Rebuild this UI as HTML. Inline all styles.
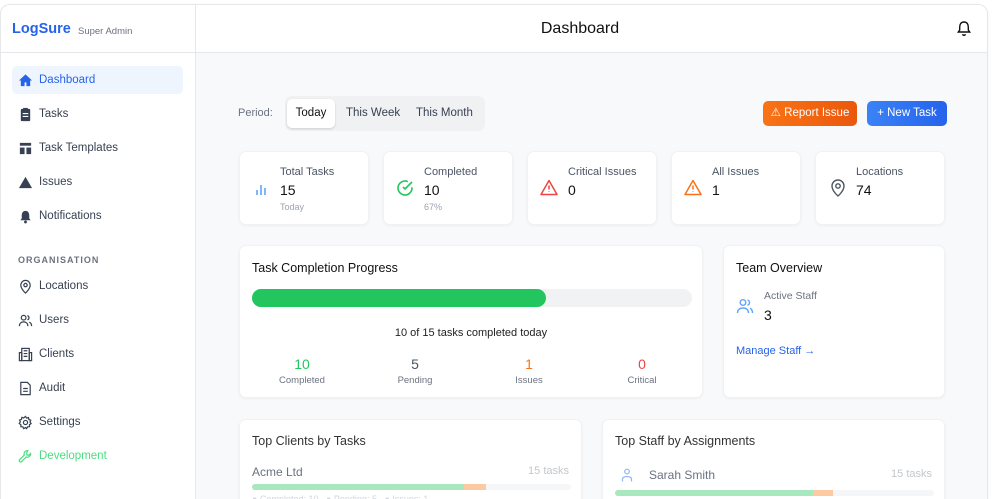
<!DOCTYPE html>
<html><head><meta charset="utf-8"><style>
*{box-sizing:border-box;margin:0;padding:0}
html,body{width:1000px;height:499px;overflow:hidden}
body{background:#fff;font-family:"Liberation Sans",Arial,sans-serif;color:#111827;position:relative}
.frame{position:absolute;left:0;top:4px;width:988px;height:495px;border:1px solid #e5e7eb;border-bottom:none;border-radius:10px 10px 0 0;overflow:hidden;background:#f8f9fb;box-shadow:0 1px 3px rgba(0,0,0,.06)}
.side{position:absolute;left:0;top:0;width:195px;height:100%;background:#fff;border-right:1px solid #e5e7eb}
.logo{position:absolute;left:11px;top:16px;font-size:14.5px;font-weight:bold;color:#2563eb}
.role{position:absolute;left:77px;top:21px;font-size:9.5px;color:#6b7280}
.sline{position:absolute;left:0;top:47px;width:195px;border-top:1px solid #e5e7eb}
.nav{position:absolute;left:11px;width:171px;height:28px;display:flex;align-items:center;font-size:11.5px;color:#374151;padding-left:6px}
.nav svg{width:15px;height:15px;margin-right:6px}
.nav.act{background:#eff5ff;color:#2563eb;border-radius:5px}
.org{position:absolute;left:17px;top:250px;font-size:9px;letter-spacing:1px;color:#6b7280;font-weight:bold}
.head{position:absolute;left:195px;top:0;right:0;height:48px;background:#fff;border-bottom:1px solid #e5e7eb}
.title{position:absolute;left:0;width:768px;text-align:center;top:15px;font-size:16px;color:#111}
.card{position:absolute;background:#fff;border-radius:7px;box-shadow:0 1px 2px rgba(0,0,0,.05);border:1px solid #f1f2f4}
.lbl{font-size:11px;color:#4b5563}
.big{font-size:14px;color:#111}
.sub{font-size:9px;color:#9ca3af}
</style></head><body>
<div class="frame">
<div class="side">
<div class="logo">LogSure</div><div class="role">Super Admin</div>
<div class="sline"></div>
<div class="nav act" style="top:61px"><svg viewBox="0 0 16 16"><path d="M8 1.5 1 8h2v6h4v-4h2v4h4V8h2z" fill="#2563eb"/></svg>Dashboard</div>
<div class="nav" style="top:95px"><svg viewBox="0 0 16 16"><rect x="3" y="2" width="10" height="13" rx="1" fill="#374151"/><rect x="5.5" y="1" width="5" height="2.5" fill="#374151"/><path d="M5 7h6M5 10h6" stroke="#fff" stroke-width="1.2"/></svg>Tasks</div>
<div class="nav" style="top:129px"><svg viewBox="0 0 16 16"><rect x="2" y="2" width="12" height="3" fill="#374151"/><rect x="2" y="7" width="5" height="7" fill="#374151"/><rect x="9" y="7" width="5" height="7" fill="#374151"/></svg>Task Templates</div>
<div class="nav" style="top:163px"><svg viewBox="0 0 16 16"><path d="M8 2 15 14H1z" fill="#374151"/></svg>Issues</div>
<div class="nav" style="top:197px"><svg viewBox="0 0 16 16"><path d="M8 2c-3 0-4 2.5-4 5v3l-1.5 2h11L12 10V7c0-2.5-1-5-4-5z" fill="#374151"/><circle cx="8" cy="13.8" r="1.5" fill="#374151"/></svg>Notifications</div>
<div class="org">ORGANISATION</div>
<div class="nav" style="top:267px"><svg viewBox="0 0 16 16" fill="none" stroke="#374151" stroke-width="1.3"><path d="M8 15s5-4.5 5-8.5A5 5 0 0 0 3 6.5C3 10.5 8 15 8 15z"/><circle cx="8" cy="6.5" r="1.8"/></svg>Locations</div>
<div class="nav" style="top:301px"><svg viewBox="0 0 16 16" fill="none" stroke="#374151" stroke-width="1.3"><circle cx="6" cy="5" r="2.5"/><path d="M1.5 14c0-3 2-4.5 4.5-4.5s4.5 1.5 4.5 4.5M10 2.7a2.4 2.4 0 0 1 0 4.6M12 9.8c1.5.5 2.5 2 2.5 4.2"/></svg>Users</div>
<div class="nav" style="top:335px"><svg viewBox="0 0 16 16" fill="none" stroke="#374151" stroke-width="1.3"><rect x="4" y="1.5" width="8" height="13"/><path d="M1.5 6h2.5v8.5H1.5zM12 6h2.5v8.5H12zM6 4h4M6 7h4M6 10h4"/></svg>Clients</div>
<div class="nav" style="top:369px"><svg viewBox="0 0 16 16" fill="none" stroke="#374151" stroke-width="1.3"><path d="M3 1.5h7l3 3v10H3z"/><path d="M5.5 8h5M5.5 11h5"/></svg>Audit</div>
<div class="nav" style="top:403px"><svg viewBox="0 0 16 16" fill="none" stroke="#374151" stroke-width="1.3"><circle cx="8" cy="8" r="2.2"/><path d="M8 1.5l1.2 1.8 2-.6.4 2.1 2 .8-.8 2 1.2 1.6-1.8 1.2.1 2.1-2.1.1-1 1.9L8 13.4l-1.9 1.1-1-1.9-2.1-.1.1-2.1L1.3 9l1.2-1.6-.8-2 2-.8.4-2.1 2 .6z"/></svg>Settings</div>
<div class="nav" style="top:437px;color:#4ade80"><svg viewBox="0 0 16 16" fill="none" stroke="#4ade80" stroke-width="1.3"><path d="M10.5 1.8a3.5 3.5 0 0 0-3.8 4.7L1.8 11.4a1.4 1.4 0 0 0 2 2l4.9-4.9a3.5 3.5 0 0 0 4.7-3.8l-2 2-1.9-.3-.3-1.9z"/></svg>Development</div>
</div>
<div class="head"><div class="title">Dashboard</div>
<svg style="position:absolute;left:760px;top:15px" width="16" height="17" viewBox="0 0 16 17" fill="none" stroke="#111" stroke-width="1.4"><path d="M8 2c-3 0-4.3 2.3-4.3 5v3L2.3 12h11.4L12.3 10V7C12.3 4.3 11 2 8 2z"/><path d="M6.5 14.2a1.6 1.6 0 0 0 3 0"/></svg>
</div>
</div>
<div style="position:absolute;left:238px;top:107px;font-size:11px;color:#6b7280">Period:</div>
<div style="position:absolute;left:285px;top:96px;width:200px;height:35px;background:#f0f1f3;border-radius:7px"></div>
<div style="position:absolute;left:287px;top:99px;width:48px;height:29px;background:#fff;border-radius:5px;box-shadow:0 1px 2px rgba(0,0,0,.15);font-size:11.5px;text-align:center;line-height:29px;color:#111">Today</div>
<div style="position:absolute;left:346px;top:107px;font-size:11.5px;color:#374151">This Week</div>
<div style="position:absolute;left:416px;top:107px;font-size:11.5px;color:#374151">This Month</div>
<div style="position:absolute;left:763px;top:101px;width:94px;height:25px;background:linear-gradient(90deg,#f97316,#ea580c);border-radius:5px;color:#fff;font-size:11.5px;text-align:center;line-height:25px">⚠ Report Issue</div>
<div style="position:absolute;left:867px;top:101px;width:80px;height:25px;background:linear-gradient(90deg,#3b82f6,#2563eb);border-radius:5px;color:#fff;font-size:11.5px;text-align:center;line-height:25px">+ New Task</div>

<div class="card" style="left:239px;top:151px;width:130px;height:74px">
<svg style="position:absolute;left:14px;top:30px" width="14" height="14" viewBox="0 0 14 14" stroke="#60a5fa" stroke-width="1.6"><path d="M3 13V8M7 13V3M11 13V6"/></svg>
<div class="lbl" style="position:absolute;left:40px;top:14px">Total Tasks</div><div class="big" style="position:absolute;left:40px;top:30px">15</div><div class="sub" style="position:absolute;left:40px;top:50px">Today</div></div>
<div class="card" style="left:383px;top:151px;width:130px;height:74px">
<svg style="position:absolute;left:12px;top:27px" width="18" height="18" viewBox="0 0 18 18" fill="none" stroke="#22c55e" stroke-width="1.6"><path d="M16 8.3V9a7 7 0 1 1-4.2-6.4"/><path d="M16 3 9 10l-2-2"/></svg>
<div class="lbl" style="position:absolute;left:40px;top:14px">Completed</div><div class="big" style="position:absolute;left:40px;top:30px">10</div><div class="sub" style="position:absolute;left:40px;top:50px">67%</div></div>
<div class="card" style="left:527px;top:151px;width:130px;height:74px">
<svg style="position:absolute;left:12px;top:27px" width="18" height="17" viewBox="0 0 18 17" fill="none" stroke="#ef4444" stroke-width="1.5"><path d="M9 1.5 17 15.5H1z" stroke-linejoin="round"/><path d="M9 6.5v4M9 12.5v.5"/></svg>
<div class="lbl" style="position:absolute;left:40px;top:14px">Critical Issues</div><div class="big" style="position:absolute;left:40px;top:30px">0</div></div>
<div class="card" style="left:671px;top:151px;width:130px;height:74px">
<svg style="position:absolute;left:12px;top:27px" width="18" height="17" viewBox="0 0 18 17" fill="none" stroke="#f97316" stroke-width="1.5"><path d="M9 1.5 17 15.5H1z" stroke-linejoin="round"/><path d="M9 6.5v4M9 12.5v.5"/></svg>
<div class="lbl" style="position:absolute;left:40px;top:14px">All Issues</div><div class="big" style="position:absolute;left:40px;top:30px">1</div></div>
<div class="card" style="left:815px;top:151px;width:130px;height:74px">
<svg style="position:absolute;left:14px;top:27px" width="16" height="18" viewBox="0 0 16 18" fill="none" stroke="#4b5563" stroke-width="1.4"><path d="M8 17s6-5 6-10A6 6 0 0 0 2 7c0 5 6 10 6 10z"/><circle cx="8" cy="7" r="2.2"/></svg>
<div class="lbl" style="position:absolute;left:40px;top:14px">Locations</div><div class="big" style="position:absolute;left:40px;top:30px">74</div></div>

<div class="card" style="left:239px;top:245px;width:464px;height:153px">
<div style="position:absolute;left:12px;top:15px;font-size:12.5px;color:#111">Task Completion Progress</div>
<div style="position:absolute;left:12px;top:43px;width:440px;height:18px;background:#f1f2f4;border-radius:9px"><div style="width:294px;height:18px;background:#22c55e;border-radius:9px"></div></div>
<div style="position:absolute;left:0;right:0;top:81px;text-align:center;font-size:11px;color:#222">10 of 15 tasks completed today</div>
<div style="position:absolute;left:22px;top:110px;width:80px;text-align:center"><div style="font-size:14px;color:#22c55e">10</div><div style="font-size:9.5px;color:#6b7280;margin-top:3px">Completed</div></div>
<div style="position:absolute;left:135px;top:110px;width:80px;text-align:center"><div style="font-size:14px;color:#4b5563">5</div><div style="font-size:9.5px;color:#6b7280;margin-top:3px">Pending</div></div>
<div style="position:absolute;left:249px;top:110px;width:80px;text-align:center"><div style="font-size:14px;color:#f97316">1</div><div style="font-size:9.5px;color:#6b7280;margin-top:3px">Issues</div></div>
<div style="position:absolute;left:362px;top:110px;width:80px;text-align:center"><div style="font-size:14px;color:#ef4444">0</div><div style="font-size:9.5px;color:#6b7280;margin-top:3px">Critical</div></div>
</div>
<div class="card" style="left:723px;top:245px;width:222px;height:153px">
<div style="position:absolute;left:12px;top:15px;font-size:12.5px;color:#111">Team Overview</div>
<svg style="position:absolute;left:12px;top:51px" width="18" height="18" viewBox="0 0 18 18" fill="none" stroke="#60a5fa" stroke-width="1.4"><circle cx="7" cy="5.5" r="2.8"/><path d="M1.5 16c0-3.3 2.3-5 5.5-5s5.5 1.7 5.5 5M11.5 3a2.7 2.7 0 0 1 0 5.2M14 11.3c1.6.6 2.5 2.2 2.5 4.7"/></svg>
<div style="position:absolute;left:40px;top:44px;font-size:10.5px;color:#6b7280">Active Staff</div>
<div style="position:absolute;left:40px;top:61px;font-size:14px;color:#111">3</div>
<div style="position:absolute;left:12px;top:99px;font-size:11px;color:#2563eb">Manage Staff →</div>
</div>

<div class="card" style="left:239px;top:419px;width:343px;height:100px">
<div style="position:absolute;left:12px;top:14px;font-size:12.5px;color:#333">Top Clients by Tasks</div>
<div style="position:absolute;left:12px;top:45px;font-size:12px;color:#6b7280">Acme Ltd</div>
<div style="position:absolute;right:12px;top:45px;font-size:11px;color:#c4c7cc">15 tasks</div>
<div style="position:absolute;left:12px;top:64px;width:319px;height:6px;background:#f5f6f7;border-radius:3px"><div style="float:left;width:212px;height:6px;background:#a7e8bf;border-radius:3px 0 0 3px"></div><div style="float:left;width:22px;height:6px;background:#fdc9a3"></div></div>
<div style="position:absolute;left:12px;top:74px;font-size:9px;color:#d1d5db">● Completed: 10 &nbsp; ● Pending: 5 &nbsp; ● Issues: 1</div>
</div>
<div class="card" style="left:602px;top:419px;width:343px;height:100px">
<div style="position:absolute;left:12px;top:14px;font-size:12.5px;color:#333">Top Staff by Assignments</div>
<svg style="position:absolute;left:18px;top:48px" width="12" height="14" viewBox="0 0 12 14" fill="none" stroke="#93b4f8" stroke-width="1.2"><circle cx="6" cy="3.5" r="2.3"/><path d="M1.5 13.5V11c0-1.5 2-2.5 4.5-2.5s4.5 1 4.5 2.5v2.5"/></svg>
<div style="position:absolute;left:46px;top:48px;font-size:12px;color:#6b7280">Sarah Smith</div>
<div style="position:absolute;right:12px;top:48px;font-size:11px;color:#c4c7cc">15 tasks</div>
<div style="position:absolute;left:12px;top:70px;width:319px;height:6px;background:#f5f6f7;border-radius:3px"><div style="float:left;width:198px;height:6px;background:#a7e8bf;border-radius:3px 0 0 3px"></div><div style="float:left;width:20px;height:6px;background:#fdc9a3"></div></div>
</div>
</body></html>
